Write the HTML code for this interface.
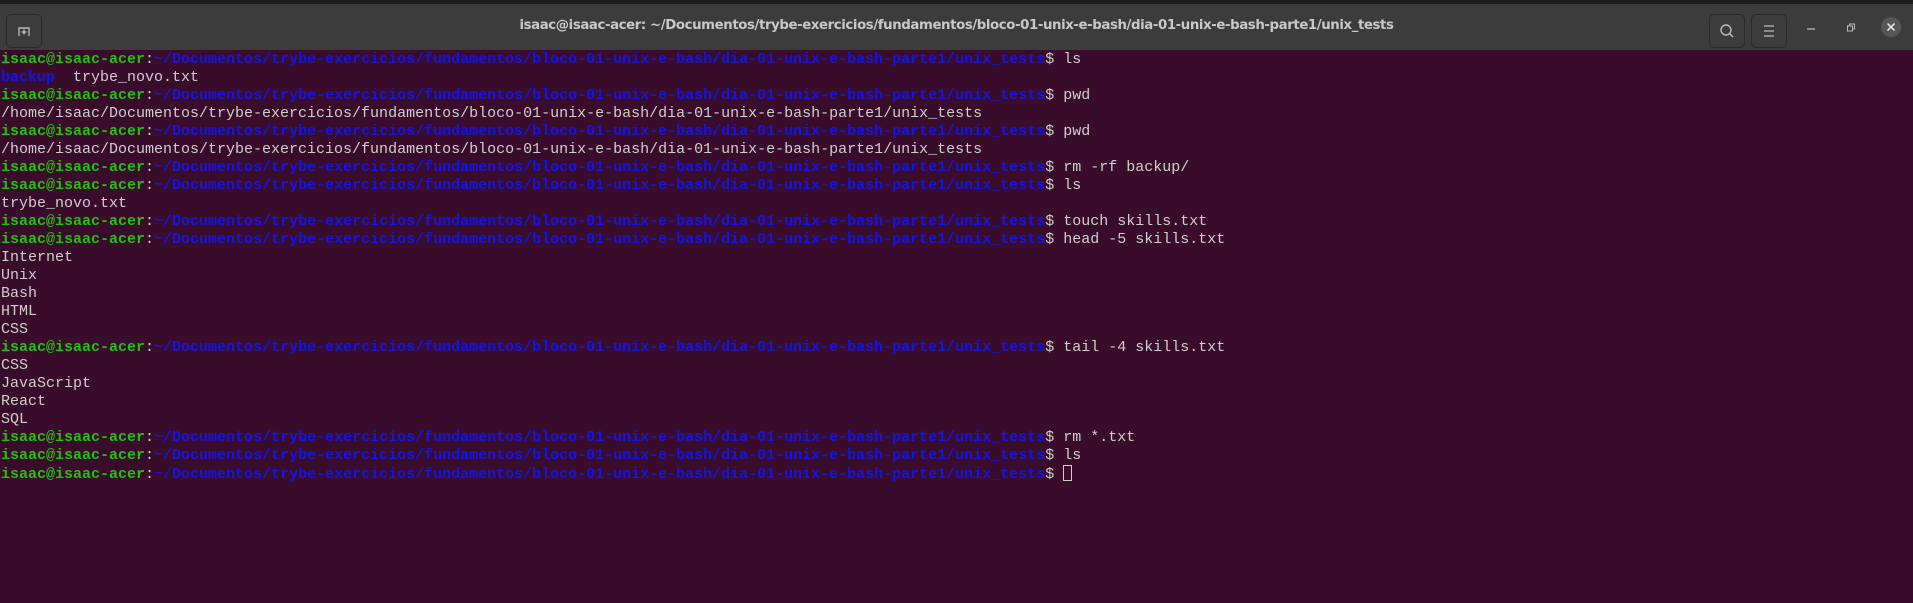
<!DOCTYPE html>
<html><head><meta charset="utf-8"><style>
html,body{margin:0;padding:0;width:1913px;height:603px;overflow:hidden;background:#380c2a}
#top{position:absolute;left:0;top:0;width:1913px;height:4px;background:#1e1e1e}
#hdr{position:absolute;left:0;top:4px;width:1913px;height:46px;background:#3c3c3c;}
#title{position:absolute;left:0;right:0;top:18px;text-align:center;color:#c9c9c9;font:bold 13.3px "DejaVu Sans",sans-serif;letter-spacing:-0.4px}
.btn{position:absolute;top:10px;width:36px;height:34px;border:1px solid #2a2a2a;border-radius:5px;background:#3c3c3c;box-sizing:border-box}
#term{position:absolute;left:1px;top:51px;font:15px/18px "Liberation Mono",monospace;color:#d0cfcc;white-space:pre}
.g{color:#22c20c;font-weight:bold}.b{color:#1414e6;font-weight:bold}
.cur{display:inline-block;width:9px;height:16px;border:1px solid #d0cfcc;box-sizing:border-box;vertical-align:-3px}
</style></head><body>
<div id="top"></div>
<div id="hdr">
<div class="btn" style="left:6px;"><svg width="36" height="34" style="position:absolute;left:-1px;top:-1px"><path d="M13 22 v-8 h10 v8" stroke="#ccc" fill="none" stroke-width="1.2"/><path d="M18 15.5 v5 M15.5 18 h5" stroke="#ccc" stroke-width="1.2"/></svg></div>
<div class="btn" style="left:1709px;"><svg width="36" height="34" style="position:absolute;left:-1px;top:-1px"><circle cx="17" cy="16" r="5" stroke="#bbb" fill="none" stroke-width="1.4"/><path d="M20.5 19.5 L24 23" stroke="#bbb" stroke-width="1.5"/></svg></div>
<div class="btn" style="left:1751px;"><svg width="36" height="34" style="position:absolute;left:-1px;top:-1px"><path d="M13 12h10M13 17h10M13 22h10" stroke="#bbb" stroke-width="1.2"/></svg></div>
<svg width="200" height="46" style="position:absolute;left:1794px;top:0"><path d="M13 25 h8" stroke="#bbb" stroke-width="1.3"/><rect x="53.5" y="22" width="5" height="5" stroke="#bbb" fill="none"/><path d="M55.5 22 v-2 h5 v5 h-2" stroke="#bbb" fill="none"/><circle cx="97" cy="23" r="10" fill="#565656"/><path d="M93.5 19.5 l7 7 M100.5 19.5 l-7 7" stroke="#eee" stroke-width="1.5"/></svg>
</div>
<div id="title">isaac@isaac-acer: ~/Documentos/trybe-exercicios/fundamentos/bloco-01-unix-e-bash/dia-01-unix-e-bash-parte1/unix_tests</div>
<div id="term"><span class="g">isaac@isaac-acer</span>:<span class="b">~/Documentos/trybe-exercicios/fundamentos/bloco-01-unix-e-bash/dia-01-unix-e-bash-parte1/unix_tests</span>$ ls
<span class="b">backup</span>  trybe_novo.txt
<span class="g">isaac@isaac-acer</span>:<span class="b">~/Documentos/trybe-exercicios/fundamentos/bloco-01-unix-e-bash/dia-01-unix-e-bash-parte1/unix_tests</span>$ pwd
/home/isaac/Documentos/trybe-exercicios/fundamentos/bloco-01-unix-e-bash/dia-01-unix-e-bash-parte1/unix_tests
<span class="g">isaac@isaac-acer</span>:<span class="b">~/Documentos/trybe-exercicios/fundamentos/bloco-01-unix-e-bash/dia-01-unix-e-bash-parte1/unix_tests</span>$ pwd
/home/isaac/Documentos/trybe-exercicios/fundamentos/bloco-01-unix-e-bash/dia-01-unix-e-bash-parte1/unix_tests
<span class="g">isaac@isaac-acer</span>:<span class="b">~/Documentos/trybe-exercicios/fundamentos/bloco-01-unix-e-bash/dia-01-unix-e-bash-parte1/unix_tests</span>$ rm -rf backup/
<span class="g">isaac@isaac-acer</span>:<span class="b">~/Documentos/trybe-exercicios/fundamentos/bloco-01-unix-e-bash/dia-01-unix-e-bash-parte1/unix_tests</span>$ ls
trybe_novo.txt
<span class="g">isaac@isaac-acer</span>:<span class="b">~/Documentos/trybe-exercicios/fundamentos/bloco-01-unix-e-bash/dia-01-unix-e-bash-parte1/unix_tests</span>$ touch skills.txt
<span class="g">isaac@isaac-acer</span>:<span class="b">~/Documentos/trybe-exercicios/fundamentos/bloco-01-unix-e-bash/dia-01-unix-e-bash-parte1/unix_tests</span>$ head -5 skills.txt
Internet
Unix
Bash
HTML
CSS
<span class="g">isaac@isaac-acer</span>:<span class="b">~/Documentos/trybe-exercicios/fundamentos/bloco-01-unix-e-bash/dia-01-unix-e-bash-parte1/unix_tests</span>$ tail -4 skills.txt
CSS
JavaScript
React
SQL
<span class="g">isaac@isaac-acer</span>:<span class="b">~/Documentos/trybe-exercicios/fundamentos/bloco-01-unix-e-bash/dia-01-unix-e-bash-parte1/unix_tests</span>$ rm *.txt
<span class="g">isaac@isaac-acer</span>:<span class="b">~/Documentos/trybe-exercicios/fundamentos/bloco-01-unix-e-bash/dia-01-unix-e-bash-parte1/unix_tests</span>$ ls
<span class="g">isaac@isaac-acer</span>:<span class="b">~/Documentos/trybe-exercicios/fundamentos/bloco-01-unix-e-bash/dia-01-unix-e-bash-parte1/unix_tests</span>$ <span class="cur"></span></div>
</body></html>
